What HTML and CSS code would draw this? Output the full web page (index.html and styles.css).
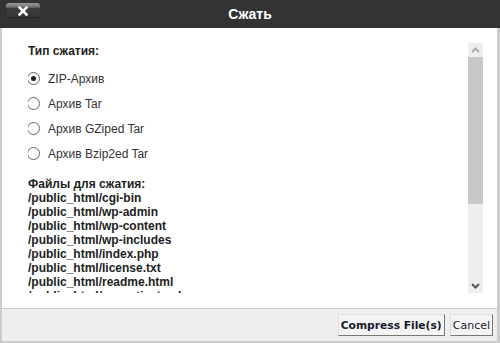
FILE: index.html
```html
<!DOCTYPE html>
<html lang="ru">
<head>
    <meta charset="UTF-8">
    <title>Сжать</title>
    <link rel="stylesheet" href="styles.css">
</head>
<body>
    <div class="dialog">
        <header class="titlebar">
            <button class="close-btn">
                <svg width="10" height="10" viewBox="0 0 10 10"><path d="M1.5 1.5 L8.5 8.5 M8.5 1.5 L1.5 8.5" stroke="#fff" stroke-width="2.6" stroke-linecap="square"/></svg>
            </button>
            <h1>Сжать</h1>
        </header>

        <main class="panel">
            <div class="scroll-view">
                <h2>Тип сжатия:</h2>
                <ul class="options">
                    <li><span class="radio checked"></span>ZIP-Архив</li>
                    <li><span class="radio"></span>Архив Tar</li>
                    <li><span class="radio"></span>Архив GZiped Tar</li>
                    <li><span class="radio"></span>Архив Bzip2ed Tar</li>
                </ul>
                <h2 class="files-title">Файлы для сжатия:</h2>
                <ul class="files">
                    <li>/public_html/cgi-bin</li>
                    <li>/public_html/wp-admin</li>
                    <li>/public_html/wp-content</li>
                    <li>/public_html/wp-includes</li>
                    <li>/public_html/index.php</li>
                    <li>/public_html/license.txt</li>
                    <li>/public_html/readme.html</li>
                    <li>/public_html/wp-activate.php</li>
                </ul>
            </div>
            <div class="scrollbar">
                <div class="sb-btn">
                    <svg width="15" height="14" viewBox="0 0 15 14"><polyline points="4,9 7.5,5.5 11,9" fill="none" stroke="#aaa" stroke-width="2"/></svg>
                </div>
                <div class="sb-thumb"></div>
                <div class="sb-track"></div>
                <div class="sb-btn">
                    <svg width="15" height="14" viewBox="0 0 15 14"><polyline points="4,5 7.5,8.5 11,5" fill="none" stroke="#555" stroke-width="2"/></svg>
                </div>
            </div>
        </main>

        <footer class="actions">
            <button class="btn primary">Compress File(s)</button>
            <button class="btn">Cancel</button>
        </footer>
    </div>
</body>
</html>
```

FILE: styles.css
```css
body {
    margin: 0;
    padding: 0;
    font-family: "Liberation Sans", Arial, sans-serif;
    background: #fff;
}
.dialog {
    width: 500px;
    height: 343px;
    display: flex;
    flex-direction: column;
}
.titlebar {
    height: 28px;
    background-color: #333;
    display: flex;
    align-items: center;
    position: relative;
}
.titlebar h1 {
    flex: 1;
    margin: 0;
    text-align: center;
    color: #fff;
    font-size: 14px;
    font-weight: bold;
    line-height: 28px;
}
.close-btn {
    position: absolute;
    left: 6px;
    top: 3px;
    width: 34px;
    height: 14px;
    padding: 0;
    border: none;
    border-radius: 3px;
    background: linear-gradient(#9a9a9a 0, #6e6e6e 30%, #3e3e3e 36%, #353535 100%);
    box-shadow: 0 1px 1px #1d2b2e;
    display: flex;
    align-items: center;
    justify-content: center;
}
.close-btn svg {
    display: block;
    margin-top: 1px;
}
.panel {
    height: 250px;
    padding: 15px 14px 15px 26px;
    border-left: 2px solid #ccc;
    border-right: 3px solid #ccc;
    display: flex;
    background: #fff;
}
.scroll-view {
    flex: 1;
    overflow: hidden;
    padding-top: 1px;
    color: #222;
    font-size: 12px;
    line-height: 14px;
}
h2 {
    margin: 0;
    font-size: 12px;
    font-weight: bold;
    line-height: 14px;
}
.options {
    list-style: none;
    margin: 8px 0 0;
    padding: 0;
}
.options li {
    height: 25px;
    display: flex;
    align-items: center;
    color: #333;
}
.radio {
    width: 11px;
    height: 11px;
    border: 1px solid #666;
    border-radius: 50%;
    margin: 0 8px 0 -1px;
    display: flex;
    align-items: center;
    justify-content: center;
    box-sizing: content-box;
}
.radio.checked::after {
    content: "";
    width: 5px;
    height: 5px;
    border-radius: 50%;
    background: #222;
}
.files-title {
    margin-top: 11px;
}
.files {
    list-style: none;
    margin: 0;
    padding: 0;
    font-weight: bold;
}
.scrollbar {
    width: 15px;
    display: flex;
    flex-direction: column;
    background: #eee;
}
.sb-btn {
    height: 14px;
}
.sb-btn svg {
    display: block;
}
.sb-thumb {
    height: 147px;
    background: #c8c8c8;
}
.sb-track {
    flex: 1;
}
.actions {
    flex: 1;
    background: #eee;
    border: 2px solid #ccc;
    border-top: 1px solid #ccc;
    border-right-width: 3px;
    display: flex;
    justify-content: flex-end;
    align-items: center;
    gap: 5px;
    padding-right: 4px;
}
.btn {
    height: 22px;
    padding: 0 2px;
    background: #f4f4f4;
    border: 1px solid;
    border-color: #ddd #777 #777 #ddd;
    font-family: "DejaVu Sans", sans-serif;
    font-size: 11px;
    color: #1a1a2e;
}
.btn.primary {
    font-size: 10.7px;
    font-weight: bold;
}
```
